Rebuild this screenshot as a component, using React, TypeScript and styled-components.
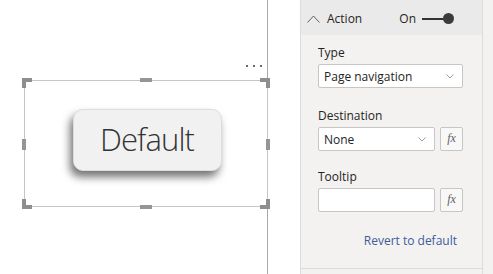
import styled, { createGlobalStyle } from "styled-components";

const GlobalStyle = createGlobalStyle`
  html, body {
    margin: 0;
    padding: 0;
    background: #ffffff;
    font-family: "Open Sans", "Liberation Sans", sans-serif;
  }
`;

const Page = styled.div`
  display: flex;
  width: 493px;
  height: 274px;
  overflow: hidden;
`;

/* ---------- report canvas ---------- */

const Canvas = styled.div`
  width: 268px;
  flex: none;
  border-right: 1px solid #a8a8a8;
  background: #ffffff;
  padding: 80px 0 0 24px;
  box-sizing: border-box;
`;

const Frame = styled.div`
  position: relative;
  width: 244px;
  height: 127px;
  box-sizing: border-box;
  border: 1px solid #c6c6c6;
  display: flex;
  align-items: center;
  justify-content: center;
  padding: 0 0 8px 2px;
`;

const Corner = styled.span<{ $v: "top" | "bottom"; $h: "left" | "right" }>`
  position: absolute;
  width: 10px;
  height: 10px;
  box-sizing: border-box;
  ${(p) => p.$v}: -3px;
  ${(p) => p.$h}: -3px;
  border-${(p) => p.$v}: 4px solid #8e8e8e;
  border-${(p) => p.$h}: 4px solid #8e8e8e;
`;

const EdgeHandle = styled.span<{ $side: "top" | "bottom" | "left" | "right" }>`
  position: absolute;
  background: #959595;
  ${(p) =>
    p.$side === "top" || p.$side === "bottom"
      ? `width: 12px; height: 4px; left: calc(50% - 6px); ${p.$side}: -3px;`
      : `width: 4px; height: 11px; top: calc(50% - 5px); ${p.$side}: -3px;`}
`;

const More = styled.div`
  position: absolute;
  top: -16px;
  right: 5px;
  display: flex;
  gap: 5px;
`;

const Dot = styled.span`
  width: 2px;
  height: 2px;
  background: #6b6b6b;
`;

const ActionButton = styled.div`
  width: 149px;
  height: 62px;
  box-sizing: border-box;
  border-radius: 10px;
  background: #f1f1f1;
  border: 1px solid #dddddd;
  box-shadow: -3px 6px 8px rgba(0, 0, 0, 0.55);
  display: flex;
  align-items: center;
  justify-content: center;
  font-family: "Open Sans", sans-serif;
  font-weight: 300;
  font-size: 31px;
  letter-spacing: -0.9px;
  color: #333333;
  padding-bottom: 2px;
`;

/* ---------- format pane ---------- */

const Gutter = styled.div`
  width: 32px;
  flex: none;
  background: #ffffff;
`;

const Pane = styled.div`
  width: 183px;
  flex: none;
  box-sizing: border-box;
  border-left: 1px solid #dedcda;
  border-right: 1px solid #dedcda;
  background: #f3f2f1;
  display: flex;
  flex-direction: column;
`;

const Rest = styled.div`
  flex: 1;
  background: #f3f2f1;
`;

const Header = styled.div`
  height: 35px;
  background: #eaeaea;
  display: flex;
  align-items: center;
  justify-content: space-between;
  padding: 2px 28px 0 6px;
  box-sizing: border-box;
  font-size: 12px;
  color: #252423;
`;

const Title = styled.div`
  display: flex;
  align-items: center;
  gap: 7px;
`;

const Toggle = styled.div`
  display: flex;
  align-items: center;
`;

const Track = styled.span`
  width: 22px;
  height: 2px;
  margin-left: 6px;
  background: #333333;
`;

const Knob = styled.span`
  width: 11px;
  height: 11px;
  margin-left: -1px;
  border-radius: 50%;
  background: #3b3b3b;
`;

const Body = styled.div`
  flex: none;
  height: 234px;
  border-bottom: 1px solid #dcdad8;
  box-sizing: border-box;
  padding: 10px 19px 0 17px;
  display: flex;
  flex-direction: column;
`;

const Label = styled.div<{ $top: number }>`
  font-size: 12px;
  line-height: 16px;
  color: #252423;
  margin-top: ${(p) => p.$top}px;
  margin-bottom: 3px;
`;

const Row = styled.div`
  display: flex;
  gap: 5px;
`;

const Field = styled.div<{ $w: number }>`
  width: ${(p) => p.$w}px;
  height: 24px;
  box-sizing: border-box;
  background: #ffffff;
  border: 1px solid #c8c6c4;
  border-radius: 2px;
  display: flex;
  align-items: center;
  justify-content: space-between;
  padding: 0 8px 0 5px;
  font-size: 12px;
  color: #252423;
`;

const FxButton = styled.div`
  width: 23px;
  height: 24px;
  box-sizing: border-box;
  border: 1px solid #c8c6c4;
  border-radius: 2px;
  background: #f8f8f8;
  display: flex;
  align-items: center;
  justify-content: center;
  font-family: "Liberation Serif", serif;
  font-style: italic;
  font-size: 12px;
  color: #605e5c;
  padding-bottom: 2px;
`;

const Revert = styled.div`
  margin-top: 21px;
  align-self: flex-end;
  margin-right: 6px;
  font-size: 12px;
  line-height: 16px;
  color: #3f5b9c;
`;

const Chevron = ({ up = false }: { up?: boolean }) => (
  <svg width={up ? 13 : 8} height={up ? 8 : 5} viewBox={up ? "0 0 13 8" : "0 0 8 5"}>
    <polyline
      points={up ? "0.5,7.5 6.5,1 12.5,7.5" : "0.5,0.5 4,4 7.5,0.5"}
      fill="none"
      stroke={up ? "#605e5c" : "#a19f9d"}
      strokeWidth="1"
    />
  </svg>
);

export default function App() {
  return (
    <>
      <GlobalStyle />
      <Page>
        <Canvas>
          <Frame>
            <More>
              <Dot />
              <Dot />
              <Dot />
            </More>
            <Corner $v="top" $h="left" />
            <Corner $v="top" $h="right" />
            <Corner $v="bottom" $h="left" />
            <Corner $v="bottom" $h="right" />
            <EdgeHandle $side="top" />
            <EdgeHandle $side="bottom" />
            <EdgeHandle $side="left" />
            <EdgeHandle $side="right" />
            <ActionButton>Default</ActionButton>
          </Frame>
        </Canvas>
        <Gutter />
        <Pane>
          <Header>
            <Title>
              <Chevron up />
              Action
            </Title>
            <Toggle>
              On
              <Track />
              <Knob />
            </Toggle>
          </Header>
          <Body>
            <Label $top={0}>Type</Label>
            <Field $w={145}>
              Page navigation
              <Chevron />
            </Field>
            <Label $top={20}>Destination</Label>
            <Row>
              <Field $w={117}>
                None
                <Chevron />
              </Field>
              <FxButton>fx</FxButton>
            </Row>
            <Label $top={18}>Tooltip</Label>
            <Row>
              <Field $w={117} />
              <FxButton>fx</FxButton>
            </Row>
            <Revert>Revert to default</Revert>
          </Body>
        </Pane>
        <Rest />
      </Page>
    </>
  );
}
